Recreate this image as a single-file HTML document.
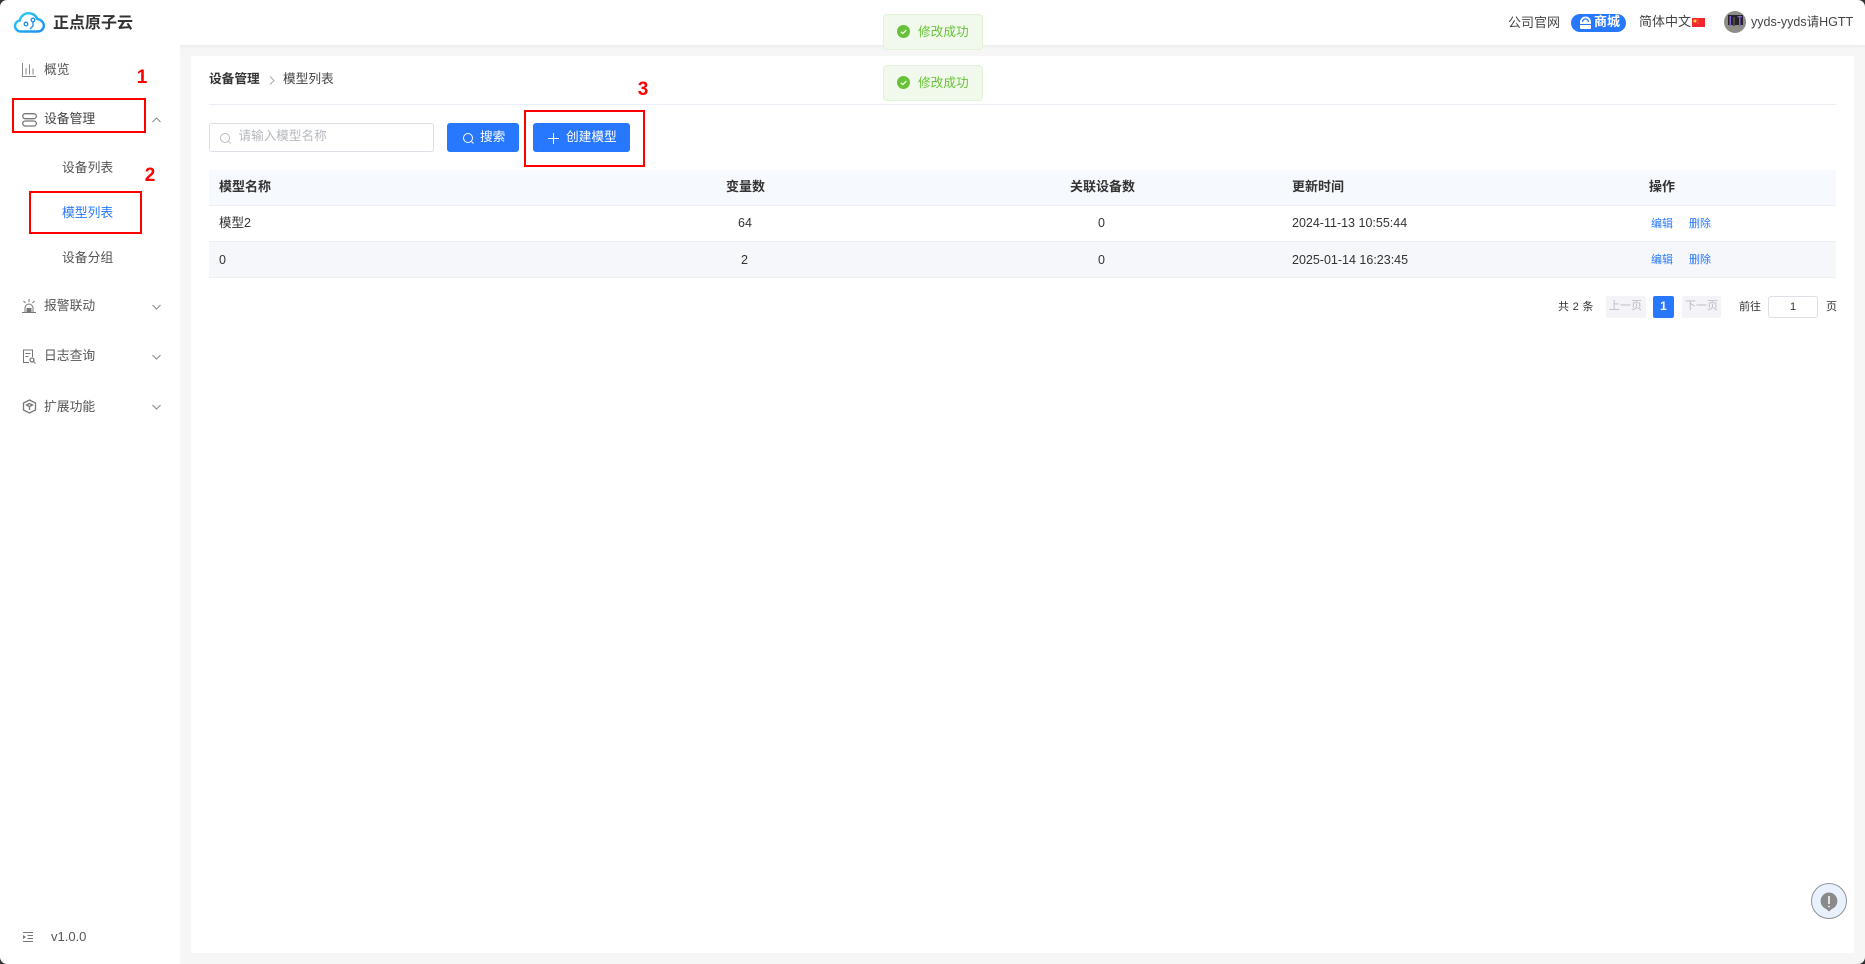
<!DOCTYPE html>
<html lang="zh"><head><meta charset="utf-8"><title>正点原子云</title>
<style>
html,body{margin:0;padding:0;width:1865px;height:964px;overflow:hidden;background:#f6f6f7;font-family:"Liberation Sans","Noto Sans CJK SC",sans-serif;font-size:13px;color:#333}
.a{position:absolute}
.t{position:absolute;white-space:nowrap;line-height:20px;height:20px}
.red{position:absolute;border:2px solid #f00;box-sizing:border-box}
.num{position:absolute;color:#f00;font-weight:bold;font-size:19px;line-height:20px;width:20px;text-align:center}
.s{color:#555;font-size:12.8px}
.h{font-weight:bold;color:#333}
.d{color:#333;font-size:12.5px}
.l{color:#2878ff;font-size:11px}
.p{font-size:11px;color:#333}
.toast{position:absolute;left:883px;width:100px;height:36px;box-sizing:border-box;background:#f0f9eb;border:1px solid #e1f3d8;border-radius:4px}
svg{position:absolute;overflow:visible}
</style></head><body>
<div class="a" style="left:0;top:0;width:1865px;height:45px;background:#fff;box-shadow:0 1px 4px rgba(0,0,0,.06)"></div>
<div class="a" style="left:0;top:45px;width:180px;height:919px;background:#fff"></div>
<div class="a" style="left:191px;top:56px;width:1663px;height:897px;background:#fff"></div>

<!-- logo -->
<svg style="left:14px;top:12px" width="31" height="21" viewBox="0 0 31 21" fill="none">
<defs><linearGradient id="g" x1="0" y1="0" x2="1" y2="1"><stop offset="0" stop-color="#2ad0f5"/><stop offset="1" stop-color="#1f8cf0"/></linearGradient></defs>
<path d="M7 19.500C3.500 19.500 1 17 1 14c0-2.800 2-5 4.700-5.400C6.600 4.300 10.300 1.200 14.800 1.200c3.900 0 7.300 2.400 8.600 5.900 3.600.3 6.400 3.200 6.400 6.600 0 3.300-2.700 5.800-6.200 5.800z" stroke="url(#g)" stroke-width="2.400"/>
<circle cx="12" cy="12" r="1.800" stroke="#1f8cf0" stroke-width="1.300"/><circle cx="19" cy="8" r="1.800" stroke="#1f8cf0" stroke-width="1.300"/><path d="M19 10v4l-3 3" stroke="#1f8cf0" stroke-width="1.300"/>
</svg>
<div class="t" style="left:53px;top:14px;font-size:16px;font-weight:bold;color:#333">正点原子云</div>

<!-- header right -->
<div class="t s" style="left:1508px;top:13px;color:#444;font-size:13px">公司官网</div>
<div class="a" style="left:1571px;top:14px;width:55px;height:18px;border-radius:9px;background:#2878ff"></div>
<svg style="left:1579px;top:16px" width="13" height="14" viewBox="0 0 13 14"><path d="M1 6a5.500 5.500 0 0 1 11 0v6a1 1 0 0 1-1 1H2a1 1 0 0 1-1-1z" fill="#fff"/><path d="M3.500 6a3 3 0 0 1 6 0" fill="none" stroke="#2878ff" stroke-width="1.300"/><path d="M1 8.500h11" stroke="#2878ff" stroke-width="1"/></svg>
<div class="t" style="left:1594px;top:12px;color:#fff;font-weight:bold">商城</div>
<div class="t s" style="left:1639px;top:12px;color:#444;font-size:13px">简体中文</div>
<svg style="left:1692px;top:18px" width="13" height="9" viewBox="0 0 13 9"><rect width="13" height="9" fill="#f0282d"/><circle cx="3" cy="3" r="1.500" fill="#ffd83a"/><circle cx="6" cy="2" r=".5" fill="#ffd83a"/><circle cx="6" cy="5" r=".5" fill="#ffd83a"/></svg>
<svg style="left:1724px;top:11px" width="22" height="22" viewBox="0 0 22 22"><circle cx="11" cy="11" r="11" fill="#8d8d85"/><path d="M4 4h15v10H4z" fill="#23232a"/><path d="M5.500 5h1.500v10H5.500z" fill="#8a5fd0"/><path d="M13.500 5H18v1.300h-1.500V16H15V6.300h-1.500z" fill="#8a5fd0"/><path d="M9 6h2v9H9z" fill="#454a3a"/></svg>
<div class="t" style="left:1751px;top:12px;font-size:12.500px;color:#444">yyds-yyds请HGTT</div>

<!-- sidebar icons -->
<svg style="left:22px;top:62px" width="14" height="15" viewBox="0 0 14 15" fill="none" stroke="#888" stroke-width="1"><path d="M.5 1v13.500h13.500M4 6v6.500M7.500 2.500v10M11 6.500v6"/></svg>
<svg style="left:22px;top:113px" width="15" height="14" viewBox="0 0 15 14" fill="none" stroke="#777" stroke-width="1.300"><rect x=".7" y=".7" width="13.600" height="5" rx="2.500"/><rect x=".7" y="8" width="13.600" height="5" rx="2.500"/></svg>
<svg style="left:22px;top:299px" width="14" height="14" viewBox="0 0 14 14" fill="none" stroke="#777" stroke-width="1"><path d="M0 13.500h14M3 13V9a4 4 0 0 1 8 0v4M7 0v3M1.500 2l2 2M12.500 2l-2 2"/><path d="M5 13V9.500h4V13" fill="#777"/></svg>
<svg style="left:22px;top:349px" width="14" height="15" viewBox="0 0 14 15" fill="none" stroke="#777" stroke-width="1"><path d="M7 13.500H1.500V1h9v7M3.500 4.500h5M3.500 7.500h3"/><circle cx="10" cy="11" r="2" stroke-width="1.300"/><path d="M11.500 12.500l2 2"/></svg>
<svg style="left:22px;top:399px" width="15" height="15" viewBox="0 0 15 15" fill="none" stroke="#777" stroke-width="1.300"><path d="M7.500 1l6 3v7l-6 3-6-3V4z"/><path d="M4.500 6l3 1.500 3-1.500-3-1.500zM7.500 7.500V11"/></svg>

<!-- sidebar text -->
<div class="t s" style="left:44px;top:60px">概览</div>
<div class="t s" style="left:44px;top:109px;color:#444">设备管理</div>
<div class="t s" style="left:62px;top:158px">设备列表</div>
<div class="t s" style="left:62px;top:203px;color:#2878ff">模型列表</div>
<div class="t s" style="left:62px;top:248px">设备分组</div>
<div class="t s" style="left:44px;top:296px">报警联动</div>
<div class="t s" style="left:44px;top:346px">日志查询</div>
<div class="t s" style="left:44px;top:397px">扩展功能</div>
<svg style="left:152px;top:117px" width="9" height="6" fill="none" stroke="#888"><path d="M.5 5L4.500 1l4 4"/></svg>
<svg style="left:152px;top:304px" width="9" height="6" fill="none" stroke="#888"><path d="M.5 1l4 4 4-4"/></svg>
<svg style="left:152px;top:354px" width="9" height="6" fill="none" stroke="#888"><path d="M.5 1l4 4 4-4"/></svg>
<svg style="left:152px;top:404px" width="9" height="6" fill="none" stroke="#888"><path d="M.5 1l4 4 4-4"/></svg>
<svg style="left:23px;top:932px" width="10" height="10" viewBox="0 0 10 10" fill="none" stroke="#777"><path d="M0 .5h10M4.500 3.500h5.500M4.500 6.500h5.500M0 9.500h10"/><path d="M0 3l3 2-3 2z" fill="#777" stroke="none"/></svg>
<div class="t s" style="left:51px;top:927px;font-size:13px">v1.0.0</div>

<!-- breadcrumb -->
<div class="t" style="left:209px;top:69px;font-weight:bold;color:#333;font-size:12.700px">设备管理</div>
<svg style="left:269px;top:76px" width="6" height="9" fill="none" stroke="#aaa"><path d="M1 .5l4 4-4 4"/></svg>
<div class="t" style="left:283px;top:69px;color:#444;font-size:12.700px">模型列表</div>
<div class="a" style="left:209px;top:104px;width:1627px;height:1px;background:#ebeef5"></div>

<!-- search -->
<div class="a" style="left:209px;top:123px;width:225px;height:29px;box-sizing:border-box;border:1px solid #dcdfe6;border-radius:3px;background:#fff"></div>
<svg style="left:220px;top:133px" width="11" height="11" fill="none" stroke="#bbb"><circle cx="5" cy="5" r="4.500"/><path d="M8.500 8.500l2 2"/></svg>
<div class="t" style="left:238.500px;top:126px;color:#b5b8be;font-size:12.600px">请输入模型名称</div>
<div class="a" style="left:447px;top:123px;width:72px;height:29px;background:#2878ff;border-radius:3px"></div>
<svg style="left:463px;top:133px" width="11" height="11" fill="none" stroke="#fff"><circle cx="5" cy="5" r="4.500"/><path d="M8.500 8.500l2 2"/></svg>
<div class="t" style="left:480px;top:127px;color:#fff;font-size:12.700px">搜索</div>
<div class="a" style="left:533px;top:123px;width:97px;height:29px;background:#2878ff;border-radius:3px"></div>
<svg style="left:548px;top:133px" width="11" height="11" fill="none" stroke="#fff"><path d="M5.500 0v11M0 5.500h11"/></svg>
<div class="t" style="left:566px;top:127px;color:#fff;font-size:12.700px">创建模型</div>

<!-- table -->
<div class="a" style="left:209px;top:170px;width:1627px;height:35px;background:#f6f9fe"></div>
<div class="a" style="left:209px;top:205px;width:1627px;height:1px;background:#ebeef5"></div>
<div class="a" style="left:209px;top:241px;width:1627px;height:1px;background:#ebeef5"></div>
<div class="a" style="left:209px;top:242px;width:1627px;height:35px;background:#f5f7fb"></div>
<div class="a" style="left:209px;top:277px;width:1627px;height:1px;background:#ebeef5"></div>
<div class="t h" style="left:219px;top:177px">模型名称</div>
<div class="t h" style="left:726px;top:177px">变量数</div>
<div class="t h" style="left:1070px;top:177px">关联设备数</div>
<div class="t h" style="left:1292px;top:177px">更新时间</div>
<div class="t h" style="left:1649px;top:177px">操作</div>
<div class="t" style="left:219px;top:213px;font-size:12.500px">模型2</div>
<div class="t d" style="left:738px;top:213px">64</div>
<div class="t d" style="left:1098px;top:213px">0</div>
<div class="t d" style="left:1292px;top:213px">2024-11-13 10:55:44</div>
<div class="t l" style="left:1651px;top:214px">编辑</div>
<div class="t l" style="left:1689px;top:214px">删除</div>
<div class="t d" style="left:219px;top:250px">0</div>
<div class="t d" style="left:741px;top:250px">2</div>
<div class="t d" style="left:1098px;top:250px">0</div>
<div class="t d" style="left:1292px;top:250px">2025-01-14 16:23:45</div>
<div class="t l" style="left:1651px;top:250px">编辑</div>
<div class="t l" style="left:1689px;top:250px">删除</div>

<!-- pagination -->
<div class="t p" style="left:1558px;top:297px;letter-spacing:.3px">共 2 条</div>
<div class="a" style="left:1606px;top:296px;width:40px;height:22px;background:#f4f4f8;border-radius:2px"></div>
<div class="t p" style="left:1609px;top:296px;color:#b8bbc2">上一页</div>
<div class="a" style="left:1653px;top:296px;width:21px;height:22px;background:#2878ff;border-radius:2px"></div>
<div class="t" style="left:1653px;top:296px;width:21px;text-align:center;font-size:12px;font-weight:bold;color:#fff">1</div>
<div class="a" style="left:1682px;top:296px;width:39px;height:22px;background:#f4f4f8;border-radius:2px"></div>
<div class="t p" style="left:1685px;top:296px;color:#b8bbc2">下一页</div>
<div class="t p" style="left:1739px;top:297px">前往</div>
<div class="a" style="left:1768px;top:296px;width:50px;height:22px;box-sizing:border-box;border:1px solid #dcdfe6;border-radius:3px;background:#fff"></div>
<div class="t" style="left:1768px;top:297px;width:50px;text-align:center;font-size:11px;color:#333">1</div>
<div class="t p" style="left:1826px;top:297px">页</div>

<!-- help -->
<div class="a" style="left:1811px;top:883px;width:36px;height:36px;box-sizing:border-box;border-radius:50%;border:1px solid #8f939b;background:#e8f1fd"></div>
<svg style="left:1820px;top:892px" width="18" height="20" viewBox="0 0 18 20"><path d="M9 .5a8.500 8.500 0 0 1 3 16.400L9 19.500l-3-2.600A8.500 8.500 0 0 1 9 .5z" fill="#8a8a8a"/><path d="M9 4v8" stroke="#fff" stroke-width="1.500"/><circle cx="9" cy="14.500" r=".9" fill="#fff"/></svg>

<!-- toasts -->
<div class="toast" style="top:14px"></div>
<svg style="left:897px;top:25px" width="13" height="13"><circle cx="6.500" cy="6.500" r="6.500" fill="#67c23a"/><path d="M3.800 6.800l2 1.800 3.500-3.500" fill="none" stroke="#fff" stroke-width="1.200"/></svg>
<div class="t" style="left:918px;top:22px;color:#67c23a;font-size:12.700px">修改成功</div>
<div class="toast" style="top:65px"></div>
<svg style="left:897px;top:76px" width="13" height="13"><circle cx="6.500" cy="6.500" r="6.500" fill="#67c23a"/><path d="M3.800 6.800l2 1.800 3.500-3.500" fill="none" stroke="#fff" stroke-width="1.200"/></svg>
<div class="t" style="left:918px;top:73px;color:#67c23a;font-size:12.700px">修改成功</div>

<!-- annotations -->
<div class="red" style="left:12px;top:98px;width:134px;height:35px"></div>
<div class="red" style="left:29px;top:191px;width:113px;height:43px"></div>
<div class="red" style="left:524px;top:110px;width:121px;height:57px"></div>
<div class="num" style="left:132px;top:68px">1</div>
<div class="num" style="left:140px;top:166px">2</div>
<div class="num" style="left:633px;top:80px">3</div>

<!-- window corners -->
<svg style="left:0;top:0" width="7" height="7"><path d="M0 0h7A7 7 0 0 0 0 7z" fill="#333"/></svg>
<svg style="left:1858px;top:0" width="7" height="7"><path d="M7 0H0a7 7 0 0 1 7 7z" fill="#333"/></svg>
<svg style="left:0;top:957px" width="7" height="7"><path d="M0 7h7A7 7 0 0 1 0 0z" fill="#333"/></svg>
<svg style="left:1858px;top:957px" width="7" height="7"><path d="M7 7H0a7 7 0 0 0 7-7z" fill="#333"/></svg>
</body></html>
